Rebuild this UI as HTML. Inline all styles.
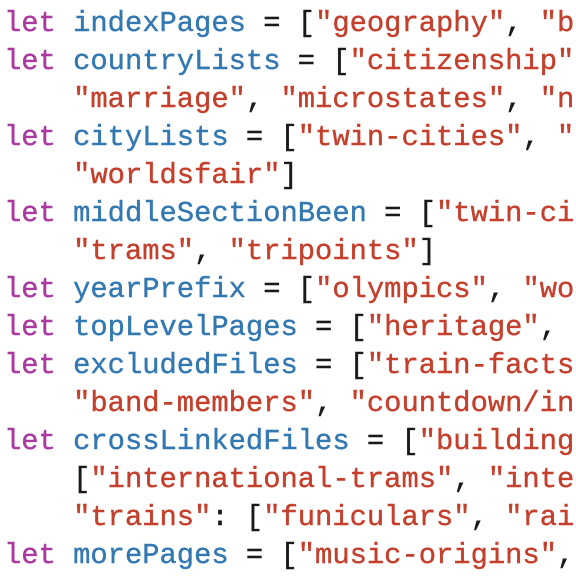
<!DOCTYPE html>
<html><head><meta charset="utf-8"><style>
html,body{margin:0;padding:0;background:#fff;width:576px;height:576px;overflow:hidden}
pre{margin:0;padding:5px 0 0 4px;font-family:"Liberation Mono","DejaVu Sans Mono",monospace;font-size:28.8px;line-height:38px;color:#1a1a1a;white-space:pre;-webkit-text-stroke:0.4px currentColor}
.k{color:#ab3aa0}.v{color:#3378b1}.s{color:#c4402c}
</style></head><body><pre><span class="k">let</span> <span class="v">indexPages</span> = [<span class="s">"geography"</span>, <span class="s">"b</span>
<span class="k">let</span> <span class="v">countryLists</span> = [<span class="s">"citizenship"</span>
    <span class="s">"marriage"</span>, <span class="s">"microstates"</span>, <span class="s">"n</span>
<span class="k">let</span> <span class="v">cityLists</span> = [<span class="s">"twin-cities"</span>, <span class="s">"</span>
    <span class="s">"worldsfair"</span>]
<span class="k">let</span> <span class="v">middleSectionBeen</span> = [<span class="s">"twin-ci</span>
    <span class="s">"trams"</span>, <span class="s">"tripoints"</span>]
<span class="k">let</span> <span class="v">yearPrefix</span> = [<span class="s">"olympics"</span>, <span class="s">"wo</span>
<span class="k">let</span> <span class="v">topLevelPages</span> = [<span class="s">"heritage"</span>, <span class="s">"</span>
<span class="k">let</span> <span class="v">excludedFiles</span> = [<span class="s">"train-facts</span>
    <span class="s">"band-members"</span>, <span class="s">"countdown/in</span>
<span class="k">let</span> <span class="v">crossLinkedFiles</span> = [<span class="s">"building</span>
    [<span class="s">"international-trams"</span>, <span class="s">"inte</span>
    <span class="s">"trains"</span>: [<span class="s">"funiculars"</span>, <span class="s">"rai</span>
<span class="k">let</span> <span class="v">morePages</span> = [<span class="s">"music-origins"</span>, </pre></body></html>
